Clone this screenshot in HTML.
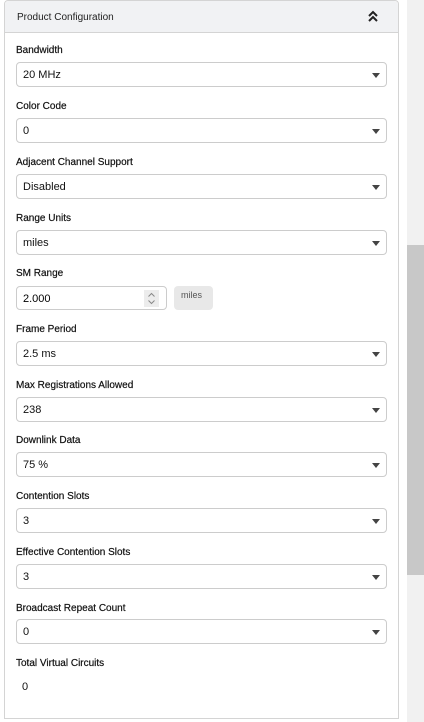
<!DOCTYPE html>
<html><head><style>
*{box-sizing:border-box;margin:0;padding:0}
body{width:424px;height:722px;background:#fff;font-family:"Liberation Sans",sans-serif;position:relative;overflow:hidden}
.panel{position:absolute;left:4px;top:0;width:395px;height:719px;border:1px solid #d4d4d4;border-radius:4px 4px 0 0}
.hdr{height:32px;background:#f1f2f4;border-bottom:1px solid #d4d4d4;font-size:10px;color:#222;padding:11px 0 0 12px;position:relative;border-radius:4px 4px 0 0}
.chev{position:absolute;right:20px;top:9px}
.lbl{position:absolute;left:16px;font-size:10px;color:#111;-webkit-text-stroke:0.2px #111}
.sel{position:absolute;left:16px;width:371px;height:25px;border:1px solid #ccc;border-radius:4px;font-size:11px;color:#111;padding:6px 0 0 6px}
.sel::after{content:"";position:absolute;right:6px;top:10px;border-left:4px solid transparent;border-right:4px solid transparent;border-top:5px solid #444}
.track{position:absolute;left:407px;top:0;width:17px;height:722px;background:#f1f1f1}
.thumb{position:absolute;left:407px;top:245px;width:17px;height:330px;background:#c8c8c8}
</style></head><body>
<div class="panel"><div class="hdr">Product Configuration
<svg class="chev" width="10" height="12" viewBox="0 0 10 12"><path d="M1 6 L5 2 L9 6 M1 11 L5 7 L9 11" stroke="#222" stroke-width="2" fill="none"/></svg></div></div>
<div class="lbl" style="top:45px">Bandwidth</div><div class="sel" style="top:62px">20 MHz</div>
<div class="lbl" style="top:101px">Color Code</div><div class="sel" style="top:118px">0</div>
<div class="lbl" style="top:157px">Adjacent Channel Support</div><div class="sel" style="top:174px">Disabled</div>
<div class="lbl" style="top:213px">Range Units</div><div class="sel" style="top:230px">miles</div>
<div class="lbl" style="top:268px">SM Range</div>
<div style="position:absolute;left:16px;top:286px;width:151px;height:24px;border:1px solid #ccc;border-radius:4px;font-size:11px;padding:6px 0 0 6px">2.000
<svg style="position:absolute;right:7px;top:3px" width="15" height="17" viewBox="0 0 15 17"><rect width="15" height="17" fill="#ececec"/><path d="M4.5 6.5 L7.5 3.5 L10.5 6.5 M4.5 10.5 L7.5 13.5 L10.5 10.5" stroke="#888" stroke-width="1" fill="none"/></svg></div>
<div style="position:absolute;left:174px;top:286px;width:39px;height:24px;background:#e8e8e8;border-radius:4px;font-size:9px;color:#555;padding:4px 0 0 7px">miles</div>
<div class="lbl" style="top:324px">Frame Period</div><div class="sel" style="top:341px">2.5 ms</div>
<div class="lbl" style="top:380px">Max Registrations Allowed</div><div class="sel" style="top:397px">238</div>
<div class="lbl" style="top:435px">Downlink Data</div><div class="sel" style="top:452px">75 %</div>
<div class="lbl" style="top:491px">Contention Slots</div><div class="sel" style="top:508px">3</div>
<div class="lbl" style="top:547px">Effective Contention Slots</div><div class="sel" style="top:564px">3</div>
<div class="lbl" style="top:603px">Broadcast Repeat Count</div><div class="sel" style="top:619px">0</div>
<div class="lbl" style="top:658px">Total Virtual Circuits</div>
<div style="position:absolute;left:22px;top:681px;font-size:11px;color:#111">0</div>
<div class="track"></div><div class="thumb"></div>
</body></html>
